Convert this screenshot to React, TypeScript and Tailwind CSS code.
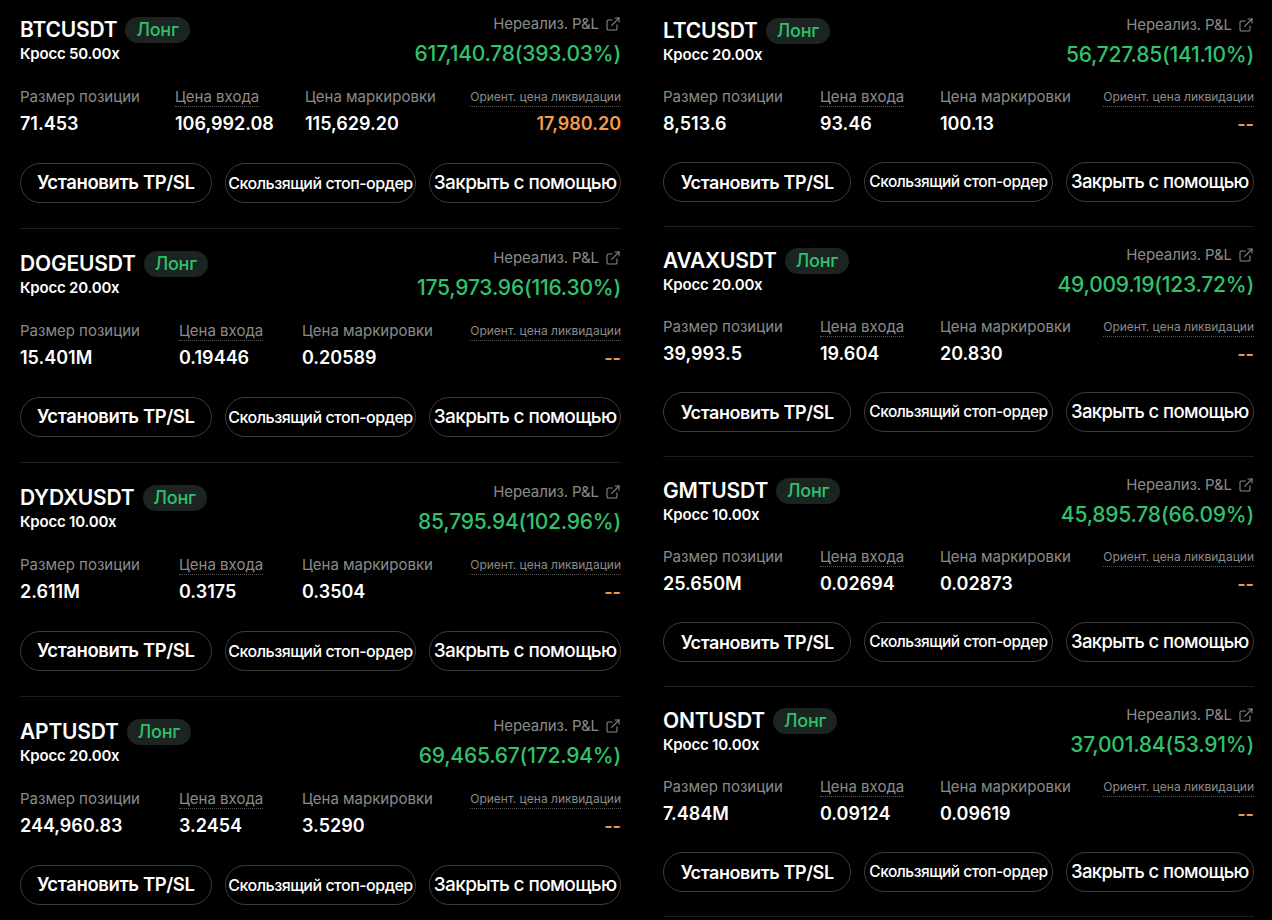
import { ExternalLink } from "lucide-react";

type Position = {
  symbol: string;
  leverage: string;
  pnl: string;
  size: string;
  entry: string;
  mark: string;
  liq: string;
  cols: string;
};

const leftPositions: Position[] = [
  { symbol: "BTCUSDT", leverage: "Кросс 50.00x", pnl: "617,140.78(393.03%)", size: "71.453", entry: "106,992.08", mark: "115,629.20", liq: "17,980.20", cols: "grid-cols-[155px_130px_1fr_auto]" },
  { symbol: "DOGEUSDT", leverage: "Кросс 20.00x", pnl: "175,973.96(116.30%)", size: "15.401M", entry: "0.19446", mark: "0.20589", liq: "--", cols: "grid-cols-[159px_123px_1fr_auto]" },
  { symbol: "DYDXUSDT", leverage: "Кросс 10.00x", pnl: "85,795.94(102.96%)", size: "2.611M", entry: "0.3175", mark: "0.3504", liq: "--", cols: "grid-cols-[159px_123px_1fr_auto]" },
  { symbol: "APTUSDT", leverage: "Кросс 20.00x", pnl: "69,465.67(172.94%)", size: "244,960.83", entry: "3.2454", mark: "3.5290", liq: "--", cols: "grid-cols-[159px_123px_1fr_auto]" },
];

const rightPositions: Position[] = [
  { symbol: "LTCUSDT", leverage: "Кросс 20.00x", pnl: "56,727.85(141.10%)", size: "8,513.6", entry: "93.46", mark: "100.13", liq: "--", cols: "grid-cols-[157px_120px_1fr_auto]" },
  { symbol: "AVAXUSDT", leverage: "Кросс 20.00x", pnl: "49,009.19(123.72%)", size: "39,993.5", entry: "19.604", mark: "20.830", liq: "--", cols: "grid-cols-[157px_120px_1fr_auto]" },
  { symbol: "GMTUSDT", leverage: "Кросс 10.00x", pnl: "45,895.78(66.09%)", size: "25.650M", entry: "0.02694", mark: "0.02873", liq: "--", cols: "grid-cols-[157px_120px_1fr_auto]" },
  { symbol: "ONTUSDT", leverage: "Кросс 10.00x", pnl: "37,001.84(53.91%)", size: "7.484M", entry: "0.09124", mark: "0.09619", liq: "--", cols: "grid-cols-[157px_120px_1fr_auto]" },
];

const PositionCard = ({ p, first, compact }: { p: Position; first: boolean; compact: boolean }) => {
  const pt = first ? (compact ? "pt-[15px]" : "pt-[14px]") : compact ? "pt-[18px]" : "pt-[19px]";
  return (
    <div className={`${pt} ${compact ? "pb-[24px]" : "pb-[25px]"} border-b border-[#1e1e1e]`}>
      {/* Header */}
      <div className="flex items-start justify-between">
        <div className="pt-[4px]">
          <div className="flex items-center gap-[8px] h-[24px]">
            <span className="text-[21px] leading-[24px] font-semibold text-white tracking-[-0.2px]">{p.symbol}</span>
            <span className="h-[26px] px-[11px] rounded-full bg-[#1b2420] text-[#2fc06c] text-[18px] leading-[26px] font-medium tracking-[-0.2px]">
              Лонг
            </span>
          </div>
          <div className="mt-[3px] text-[15px] leading-[18px] font-semibold text-white tracking-[-0.2px]">{p.leverage}</div>
        </div>
        <div className="flex flex-col items-end">
          <div className="flex items-center gap-[6px] h-[20px] text-[15px] text-[#8b8b8b] tracking-[-0.1px]">
            <span>Нереализ. P&amp;L</span>
            <ExternalLink className="w-[16px] h-[16px]" strokeWidth={1.6} />
          </div>
          <div className="mt-[6px] text-[21px] leading-[28px] font-medium text-[#31c26d] tracking-[-0.2px]">{p.pnl}</div>
        </div>
      </div>

      {/* Stats */}
      <div className={`grid ${p.cols} ${compact ? "mt-[18px]" : "mt-[19px]"}`}>
        <div>
          <div className="text-[15px] leading-[20px] text-[#8b8b8b] whitespace-nowrap">Размер позиции</div>
          <div className="mt-[5px] text-[18px] leading-[24px] font-semibold text-white">{p.size}</div>
        </div>
        <div>
          <div className="text-[15px] leading-[20px] text-[#8b8b8b] whitespace-nowrap">
            <span className="border-b border-dotted border-[#555]">Цена входа</span>
          </div>
          <div className="mt-[5px] text-[18px] leading-[24px] font-semibold text-white">{p.entry}</div>
        </div>
        <div>
          <div className="text-[15px] leading-[20px] text-[#8b8b8b] whitespace-nowrap">Цена маркировки</div>
          <div className="mt-[5px] text-[18px] leading-[24px] font-semibold text-white">{p.mark}</div>
        </div>
        <div className="flex flex-col items-end">
          <div className="text-[12px] leading-[20px] text-[#8b8b8b] whitespace-nowrap">
            <span className="border-b border-dotted border-[#555] pb-[2px]">Ориент. цена ликвидации</span>
          </div>
          <div className="mt-[5px] text-[18px] leading-[24px] font-semibold text-[#f39a4c]">{p.liq}</div>
        </div>
      </div>

      {/* Actions */}
      <div className={`grid grid-cols-3 gap-[13px] ${compact ? "mt-[26px]" : "mt-[27px]"}`}>
        <button
          className={`h-[40px] rounded-full border border-[#3d3d3d] text-white font-semibold whitespace-nowrap tracking-[-0.4px] ${
            compact ? "text-[18px]" : "text-[18.5px]"
          }`}
        >
          Установить TP/SL
        </button>
        <button
          className={`h-[40px] rounded-full border border-[#3d3d3d] text-white font-medium whitespace-nowrap tracking-[-0.5px] ${
            compact ? "text-[15.5px]" : "text-[16px]"
          }`}
        >
          Скользящий стоп-ордер
        </button>
        <button
          className={`h-[40px] rounded-full border border-[#3d3d3d] text-white font-medium whitespace-nowrap tracking-[-0.6px] ${
            compact ? "text-[18.5px]" : "text-[19px]"
          }`}
        >
          Закрыть с помощью
        </button>
      </div>
    </div>
  );
};

const App = () => {
  return (
    <div
      className="w-[1272px] h-[920px] overflow-hidden bg-black flex pl-[20px]"
      style={{ fontFamily: "Inter, 'Noto Sans', sans-serif" }}
    >
      <div className="w-[601px] flex flex-col">
        {leftPositions.map((p, i) => (
          <PositionCard key={p.symbol} p={p} first={i === 0} compact={false} />
        ))}
      </div>
      <div className="w-[591px] ml-[42px] flex flex-col">
        {rightPositions.map((p, i) => (
          <PositionCard key={p.symbol} p={p} first={i === 0} compact={true} />
        ))}
      </div>
    </div>
  );
};

export default App;
